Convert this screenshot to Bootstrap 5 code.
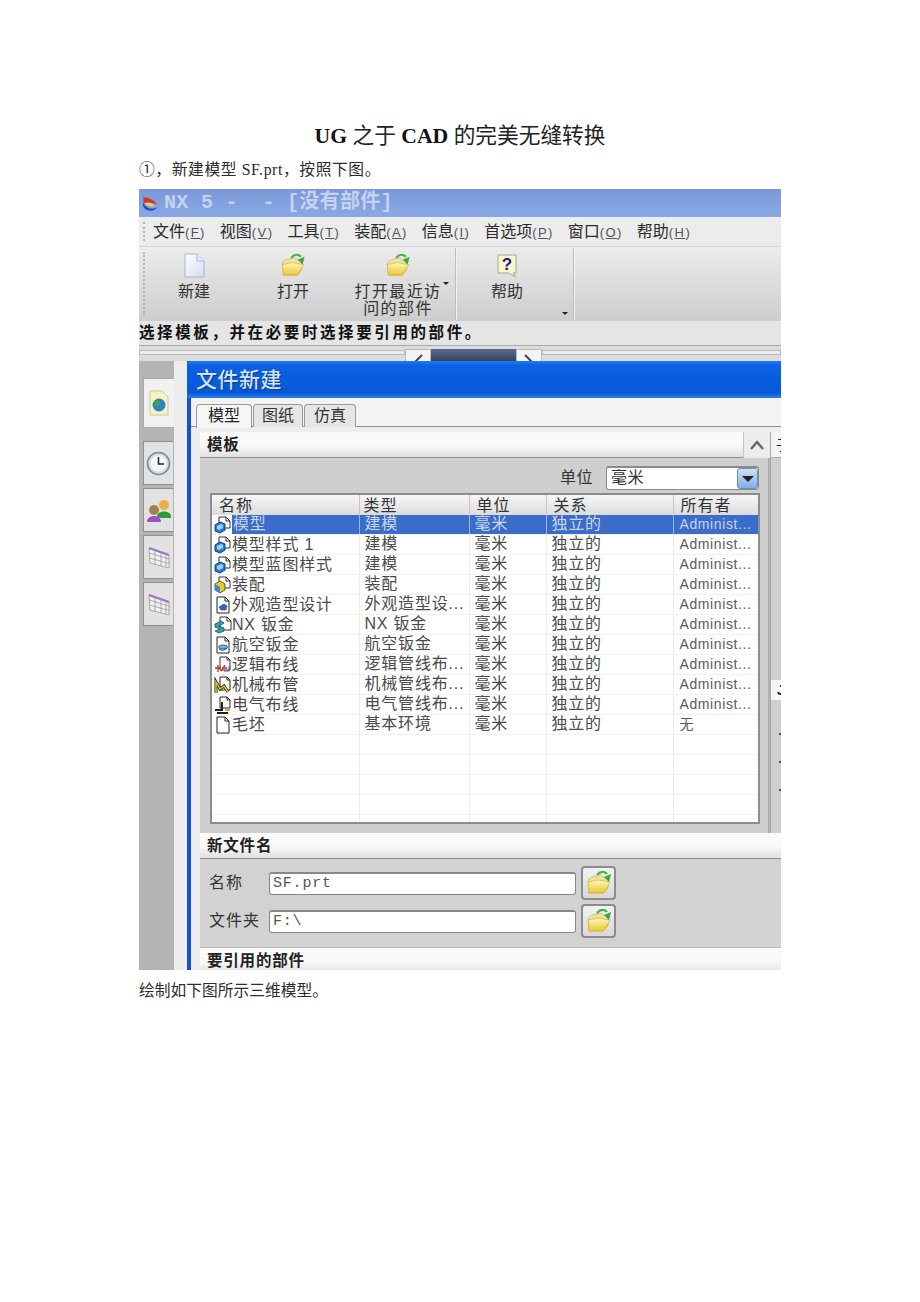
<!DOCTYPE html>
<html lang="zh-CN">
<head>
    <meta charset="UTF-8">
    <title>UG之于CAD的完美无缝转换</title>
    <link href="https://cdn.jsdelivr.net/npm/bootstrap@5.3.0/dist/css/bootstrap.min.css" rel="stylesheet">
    <style>
        html, body { height: 1302px; overflow: hidden; background: #fff; }
        body { font-family: "Liberation Sans", "Noto Sans CJK SC", sans-serif; color: #333; }
        .doc-text { font-family: "Liberation Serif", "Noto Sans CJK SC", serif; font-size: 15.75px; line-height: 20px; color: #2c2c2c; margin: 0 0 0 139px; }
        .doc-title { font-family: "Liberation Serif", "Noto Sans CJK SC", serif; font-size: 21.7px; line-height: 28px; text-align: center; color: #222; margin: 122px 0 0 0; }
        .doc-title b { font-weight: 700; color: #111; }
        .doc-step { margin-top: 10px; letter-spacing: .6px; }
        .doc-caption { margin-top: 11px; }
        .app { width: 642px; height: 781px; margin: 9px 0 0 139px; overflow: hidden; background: #d0d0d0; }

        .nx-title { height: 28px; background: linear-gradient(#7b99d8, #88a8e6); padding-left: 3px; gap: 5px; }
        .nx-title-text { font-family: "Liberation Mono", "Noto Sans CJK SC", monospace; font-size: 20px; font-weight: 700; line-height: 26px; color: #c6d3ee; white-space: pre; letter-spacing: .3px; }
        .nx-menu { height: 30px; background: #ececec; border-bottom: 1px solid #d4d4d4; padding-left: 14px; gap: 14px; }
        .grip { position: absolute; left: 4px; top: 5px; bottom: 5px; border-left: 2px dotted #b5b5b5; }
        .nx-menu-item { font-size: 16px; line-height: 29px; color: #2a2a2a; white-space: nowrap; }
        .nx-menu-item small { font-family: "Liberation Sans", sans-serif; font-size: 13px; letter-spacing: 1.4px; color: #555; }
        .nx-menu-item u { text-underline-offset: 1px; }
        .nx-tools { height: 75px; background: linear-gradient(#ececec, #cdcdcd); border-bottom: 1px solid #e4e4e4; padding-left: 9px; }
        .tool-item { text-align: center; font-size: 16px; line-height: 17px; color: #333; padding-top: 6px; }
        .tool-item svg { display: block; margin: 0 auto 5px; }
        .tool-sep { width: 2px; background: #f2f2f2; border-left: 1px solid #bdbdbd; margin: 1px 0; }
        .tool-w1 { width: 92px; }
        .tool-w2 { width: 106px; }
        .tool-w3 { width: 104px; letter-spacing: 1.4px; }
        .tool-w4 { width: 100px; }
        .tool-w5 { width: 16px; }
        .tool-gap { width: 5px; }
        .caret-down { position: absolute; width: 0; height: 0; border-left: 3px solid transparent; border-right: 3px solid transparent; border-top: 3px solid #222; }
        .caret-a { left: 304px; top: 35px; }
        .caret-b { right: 5px; bottom: 6px; }
        .nx-cue { height: 23px; background: #e5e5e5; font-size: 15.5px; line-height: 22px; font-weight: 700; color: #111; letter-spacing: 2.6px; white-space: nowrap; }
        .nx-sash { height: 16px; background: #dcdcdc; border-top: 1px solid #aaa; padding: 3px 0 0 0; align-items: flex-start; }
        .sash-line { height: 5px; border: 1px solid #bbb; background: #ececec; margin-top: 1px; }
        .sash-left { width: 266px; }
        .sash-btn { width: 26px; height: 13px; background: #f4f4f4; border: 1px solid #bbb; border-bottom: 0; }
        .sash-btn svg { display: block; margin: 4px auto 0; }
        .sash-mid { width: 85px; height: 13px; background: linear-gradient(#5d6a8c, #343d5c); }

        .nx-body { height: 609px; }
        .side-rail { width: 35px; background: #b4b4b4; padding: 17px 0 0 4px; gap: 3px; flex-shrink: 0; }
        .rail-tab { width: 30px; height: 44px; background: #e2e2e2; border: 1px solid #8f8f8f; border-right: 0; align-items: center; justify-content: center; }
        .rail-tab-on { height: 50px; background: #f1f1f1; width: 31px; margin-bottom: 10px; border-color: #aaa; }
        .side-gap { width: 13px; background: #ececec; flex-shrink: 0; }
        .dlg { width: 594px; border-left: 4px solid #1450d8; background: #efefef; }
        .dlg-title { height: 37px; background: linear-gradient(#1f7df0 0, #0a62e6 12%, #0758d6 85%, #2a7ff0 100%); color: #d3e2ff; font-size: 21px; line-height: 37px; font-weight: 500; letter-spacing: .5px; text-shadow: 1px 1px 1px #073a8c; margin-left: -4px; padding-left: 9px; border-radius: 4px 0 0 0; }
        .dlg-tabs { height: 29px; background: #f3f3f3; border-bottom: 1px solid #8e8e8e; padding: 6px 0 0 5px; gap: 1px; }
        .dlg-tab { height: 23px; background: #e6e6e6; border: 1px solid #9a9a9a; border-bottom: 0; border-radius: 4px 4px 0 0; font-size: 16px; line-height: 21px; text-align: center; color: #333; }
        .dlg-tab-on { width: 56px; background: #f6f6f6; height: 24px; color: #222; }
        .dlg-tab-2 { width: 50px; }
        .dlg-tab-3 { width: 52px; }
        .dlg-main { padding: 5px 0 0 9px; background: #ededed; height: 543px; }
        .sec-head { height: 26px; background: linear-gradient(#fbfbfb 0, #f8f8f8 55%, #e0e0e0 100%); border-bottom: 1px solid #8f8f8f; font-size: 15.5px; line-height: 26px; font-weight: 700; color: #222; padding-left: 7px; letter-spacing: .8px; }
        .sec-panel { background: #cfcfcf; }
        .up-btn { width: 27px; height: 26px; background: #ececec; border-left: 1px solid #c4c4c4; align-items: center; justify-content: center; }
        .tpl-col { width: 570px; height: 401px; flex-shrink: 0; }
        .tpl-panel { height: 375px; padding: 8px 9px 9px 10px; border-right: 2px solid #b0b0b0; }
        .unit-row { height: 23px; margin-bottom: 4px; justify-content: flex-end; font-size: 16px; line-height: 23px; color: #333; gap: 13px; letter-spacing: .5px; }
        .unit-combo { width: 153px; height: 24px; background: #fff; border: 1px solid #8a8a8a; border-top-width: 2px; border-radius: 3px; padding-left: 4px; line-height: 20px; }
        .unit-arrow { width: 21px; background: linear-gradient(#cfe2f7, #7fb0e6); border: 1px solid #6c8db8; border-radius: 3px; align-items: center; justify-content: center; }
        .unit-arrow i { width: 0; height: 0; border-left: 6px solid transparent; border-right: 6px solid transparent; border-top: 6px solid #222; }
        .tpl-box { height: 331px; width: 550px; background: #fff; border: 2px solid #8c8c8c; overflow: hidden; }
        .tpl-table { table-layout: fixed; width: 548px; margin: 0; border-collapse: collapse; }
        .tpl-table th { height: 20px; padding: 0 0 0 7px; background: linear-gradient(#f6f6f6, #dcdcdc); font-weight: 400; font-size: 16px; line-height: 19px; color: #333; border: 0; border-right: 1px solid #c6c6c6; letter-spacing: 1px; }
        .tpl-table td { height: 19.85px; padding: 0 0 0 5px; font-size: 16px; line-height: 18px; color: #4a4a4a; border: 0; border-right: 1px solid #ececec; border-bottom: 1px solid #f2f2f2; white-space: nowrap; overflow: hidden; letter-spacing: .8px; }
        .tpl-table td.owner-cell { font-size: 14px; color: #5a5a5a; padding-left: 6px; letter-spacing: .6px; }
        .tpl-table td.name-cell { padding: 0; }
        .tpl-table td.name-cell svg { flex-shrink: 0; }
        .tpl-table tr.row-on td { background: #3a6cc9; color: #c9d6f0; border-right-color: #9db5e2; }
        .tpl-table tr.row-on td.name-cell { background: #fff; }
        .name-flex { height: 19px; align-items: center; gap: 0; padding-left: 2px; }
        .name-on { flex: 1; background: #3a6cc9; color: #c9d6f0; padding-left: 1px; height: 19px; }
        .right-strip { width: 11px; background: #cfcfcf; overflow: hidden; font-size: 14px; border-left: 1px solid #a8a8a8; flex-shrink: 0; }
        .strip-head { height: 26px; background: #f4f4f4; color: #222; line-height: 26px; padding-left: 5px; border-bottom: 1px solid #a8a8a8; }
        .strip-fill { height: 222px; background: #cfcfcf; }
        .strip-tab { height: 20px; background: #f6f6f6; color: #222; line-height: 20px; padding-left: 6px; font-weight: 700; }
        .strip-tail { padding: 33px 0 0 8px; gap: 26px; }
        .strip-tail i { width: 2px; height: 2px; background: #555; }
        .file-panel { height: 89px; padding: 7px 0 0 9px; background: #d2d2d2; border-bottom: 1px solid #b5b5b5; }
        .file-row { height: 34px; gap: 5px; align-items: center; margin-bottom: 4px; font-size: 16px; color: #333; letter-spacing: 1px; }
        .file-label { width: 55px; white-space: nowrap; }
        .file-input { width: 307px; height: 23px; background: #fff; border: 1px solid #888; border-top-width: 2px; border-radius: 3px; padding-left: 3px; font-family: "Liberation Mono", monospace; font-size: 15px; line-height: 19px; color: #5e5646; letter-spacing: .8px; }
        .file-btn { width: 35px; height: 34px; background: linear-gradient(#f2f2f2, #d8d8d8); border: 2px solid #8c8c8c; border-radius: 4px; align-items: center; justify-content: center; }
    </style>
</head>
<body>
    <svg width="0" height="0" class="d-block" aria-hidden="true">
        <defs>
            <linearGradient id="folderFill" x1="0" y1="0" x2="0" y2="1"><stop offset="0" stop-color="#fdf6c0"/><stop offset="1" stop-color="#e9c92e"/></linearGradient>
            <linearGradient id="docFill" x1="0" y1="0" x2="1" y2="1"><stop offset="0" stop-color="#fff"/><stop offset="1" stop-color="#d6dcf4"/></linearGradient>
            <symbol id="ic-folder" viewBox="0 0 26 26">
                <path d="M2 10 L6 7 L15 5 L19 8 L22 8 L22 18 L17 23 L3 23 Z" fill="#f0e29a" stroke="#c6ad48" stroke-width=".6"/>
                <path d="M3 23 L2 12 L12 10 L24 12 L18 23 Z" fill="url(#folderFill)" stroke="#c6a92c" stroke-width=".6"/>
                <path d="M11 5 C14 1 19 1 21 4" fill="none" stroke="#4bb04b" stroke-width="2.2"/>
                <path d="M18 7 L25 4 L23 12 Z" fill="#37a83c"/>
            </symbol>
            <symbol id="ic-doc-blue" viewBox="0 0 18 18">
                <path d="M5 1 H12 L16 5 V12 H5 Z" fill="#fff" stroke="#333" stroke-width="1"/>
                <path d="M12 1 V5 H16" fill="none" stroke="#333" stroke-width="1"/>
                <path d="M1 9 L6 6 L11 8 V14 L6 17 L1 15 Z" fill="#2c78d8" stroke="#12407c" stroke-width="1"/>
                <path d="M3 10 L7 8 L9 9 V12 L5 14 L3 13 Z" fill="#9ad0f5"/>
            </symbol>
            <symbol id="ic-doc-asm" viewBox="0 0 18 18">
                <path d="M5 1 H12 L16 5 V12 H5 Z" fill="#fff" stroke="#333" stroke-width="1"/>
                <path d="M12 1 V5 H16" fill="none" stroke="#333" stroke-width="1"/>
                <path d="M1 8 L6 5 L11 8 V14 L6 17 L1 14 Z" fill="#e9cd2d" stroke="#5a5a20" stroke-width="1"/>
                <path d="M1 8 L6 11 V17 L1 14 Z" fill="#3c8bd8"/>
            </symbol>
            <symbol id="ic-doc-shape" viewBox="0 0 18 18">
                <path d="M3 1 H11 L15 5 V17 H3 Z" fill="#fff" stroke="#222" stroke-width="1"/>
                <path d="M11 1 V5 H15" fill="none" stroke="#222" stroke-width="1"/>
                <path d="M5 11 L10 8 L13 10 L12 14 L7 14 Z" fill="#3a68b8" stroke="#1b3c78" stroke-width=".6"/>
            </symbol>
            <symbol id="ic-doc-sheet" viewBox="0 0 18 18">
                <path d="M6 1 H13 L17 5 V14 H6 Z" fill="#fff" stroke="#333" stroke-width="1"/>
                <path d="M13 1 V5 H17" fill="none" stroke="#333" stroke-width="1"/>
                <path d="M1 8 L7 5 L10 7 L5 10 L10 12 V15 L5 17 L1 15 L6 13 L1 11 Z" fill="#3aa0a8" stroke="#14505c" stroke-width=".8"/>
            </symbol>
            <symbol id="ic-doc-aero" viewBox="0 0 18 18">
                <path d="M3 1 H11 L15 5 V17 H3 Z" fill="#fff" stroke="#222" stroke-width="1"/>
                <path d="M11 1 V5 H15" fill="none" stroke="#222" stroke-width="1"/>
                <ellipse cx="9" cy="11" rx="4.5" ry="2" fill="#6fb2e8" stroke="#1b4c88" stroke-width=".8"/>
                <path d="M5 13 Q9 16 13 12" fill="none" stroke="#1b4c88" stroke-width="1"/>
            </symbol>
            <symbol id="ic-doc-logic" viewBox="0 0 18 18">
                <path d="M6 1 H13 L16 4 V14 H6 Z" fill="#fff" stroke="#333" stroke-width="1"/>
                <path d="M13 1 V4 H16" fill="none" stroke="#333" stroke-width="1"/>
                <path d="M1 12 H7 M4 9 V16 M7 15 L11 9 M8 12 H13" stroke="#d42020" stroke-width="1.3" fill="none"/>
                <path d="M10 15 H15 V10" stroke="#3b55b8" stroke-width="1" fill="none"/>
            </symbol>
            <symbol id="ic-doc-pipe" viewBox="0 0 18 18">
                <path d="M6 1 H13 L16 4 V14 H6 Z" fill="#fff" stroke="#222" stroke-width="1"/>
                <path d="M13 1 V4 H16" fill="none" stroke="#222" stroke-width="1"/>
                <path d="M2 17 V6 L6 13 L10 10 L14 16" fill="none" stroke="#222" stroke-width="3"/>
                <path d="M2 17 V6 L6 13 L10 10 L14 16" fill="none" stroke="#e3c82c" stroke-width="1.5"/>
            </symbol>
            <symbol id="ic-doc-wire" viewBox="0 0 18 18">
                <path d="M6 1 H13 L16 4 V12 H6 Z" fill="#fff" stroke="#222" stroke-width="1"/>
                <path d="M13 1 V4 H16" fill="none" stroke="#222" stroke-width="1"/>
                <path d="M8 6 V14 H1" fill="none" stroke="#222" stroke-width="2"/>
                <path d="M3 17 H14" fill="none" stroke="#222" stroke-width="2"/>
                <path d="M11 14 H16" fill="none" stroke="#c9b02a" stroke-width="2"/>
            </symbol>
            <symbol id="ic-doc-plain" viewBox="0 0 18 18">
                <path d="M3 1 H11 L15 5 V17 H3 Z" fill="#fff" stroke="#222" stroke-width="1"/>
                <path d="M11 1 V5 H15" fill="none" stroke="#222" stroke-width="1"/>
            </symbol>
            <symbol id="ic-grid" viewBox="0 0 24 24">
                <path d="M2 3 L22 10 V23 L3 18 Z" fill="#f1f1f1" stroke="#9a9a9a" stroke-width=".8"/>
                <path d="M2 3 L22 10" stroke="#a070c8" stroke-width="2"/>
                <path d="M2.3 8 L22 14 M2.6 13 L22 18.5 M8 5 L8 19.6 M14 7.2 L14 21 M19 9 V22" stroke="#9a9a9a" stroke-width=".8" fill="none"/>
            </symbol>
        </defs>
    </svg>

    <h1 class="doc-title fw-normal"><b>UG</b> 之于 <b>CAD</b> 的完美无缝转换</h1>
    <p class="doc-text doc-step">①&#xFF0C;新建模型 SF.prt&#xFF0C;按照下图。</p>

    <div class="app">
        <!-- NX title -->
        <div class="nx-title d-flex align-items-center">
            <svg width="17" height="18" viewBox="0 0 17 18">
                <path d="M1 3 C6 3 13 6 15 11 C11 8 6 8 2 9 Z" fill="#d8342c"/>
                <path d="M1 8 C4 15 10 16 16 13 C12 18 3 18 1 12 Z" fill="#2b49b8"/>
                <path d="M3 9 C7 8 10 9 13 12 C9 13 5 12 3 9 Z" fill="#efd53c"/>
            </svg>
            <div class="nx-title-text">NX 5 -  - [没有部件]</div>
        </div>

        <!-- Menu -->
        <div class="nx-menu d-flex position-relative">
            <div class="grip"></div>
            <div class="nx-menu-item">文件<small>(<u>F</u>)</small></div>
            <div class="nx-menu-item">视图<small>(<u>V</u>)</small></div>
            <div class="nx-menu-item">工具<small>(<u>T</u>)</small></div>
            <div class="nx-menu-item">装配<small>(<u>A</u>)</small></div>
            <div class="nx-menu-item">信息<small>(<u>I</u>)</small></div>
            <div class="nx-menu-item">首选项<small>(<u>P</u>)</small></div>
            <div class="nx-menu-item">窗口<small>(<u>O</u>)</small></div>
            <div class="nx-menu-item">帮助<small>(<u>H</u>)</small></div>
        </div>

        <!-- Toolbar -->
        <div class="nx-tools d-flex position-relative">
            <div class="grip"></div>
            <div class="tool-item tool-w1">
                <svg width="24" height="25" viewBox="0 0 24 25"><path d="M3 1 H15 L22 8 V24 H3 Z" fill="url(#docFill)" stroke="#a9b0d4"/><path d="M15 1 V8 H22" fill="#eef" stroke="#a9b0d4"/></svg>
                新建
            </div>
            <div class="tool-item tool-w2">
                <svg width="26" height="25"><use href="#ic-folder"/></svg>
                打开
            </div>
            <div class="tool-item tool-w3">
                <svg width="26" height="25"><use href="#ic-folder"/></svg>
                打开最近访<br>问的部件
            </div>
            <span class="caret-down caret-a"></span>
            <div class="tool-gap"></div>
            <div class="tool-sep"></div>
            <div class="tool-item tool-w4">
                <svg width="22" height="25" viewBox="0 0 22 25">
                    <path d="M2 2 H20 V20 H17 L20 24 L12 20 H2 Z" fill="#fbf7c4" stroke="#8cae9a"/>
                    <text x="11" y="17" text-anchor="middle" font-family="Liberation Sans" font-weight="700" font-size="17" fill="#1a1a90">?</text>
                </svg>
                帮助
            </div>
            <div class="tool-w5 position-relative"><span class="caret-down caret-b"></span></div>
            <div class="tool-sep"></div>
        </div>

        <div class="nx-cue">选择模板&#xFF0C;并在必要时选择要引用的部件。</div>

        <div class="nx-sash d-flex">
            <div class="sash-line sash-left"></div>
            <div class="sash-btn"><svg width="10" height="8" viewBox="0 0 10 8"><path d="M9 1 L2 8" stroke="#444" stroke-width="2"/></svg></div>
            <div class="sash-mid"></div>
            <div class="sash-btn"><svg width="10" height="8" viewBox="0 0 10 8"><path d="M1 1 L8 8" stroke="#444" stroke-width="2"/></svg></div>
            <div class="sash-line flex-grow-1"></div>
        </div>

        <div class="nx-body d-flex">
            <!-- Side tabs -->
            <div class="side-rail d-flex flex-column">
                <div class="rail-tab rail-tab-on d-flex">
                    <svg width="24" height="26" viewBox="0 0 24 26">
                        <path d="M3 1 H15 L21 7 V25 H3 Z" fill="#fbf3bf" stroke="#c9c9a8"/>
                        <circle cx="12" cy="15" r="6.5" fill="#2f7fd0"/>
                        <path d="M7 12 C10 9 13 10 14 14 C12 16 9 17 7 15 Z" fill="#3fa84a"/>
                    </svg>
                </div>
                <div class="rail-tab d-flex">
                    <svg width="25" height="25" viewBox="0 0 25 25">
                        <circle cx="12.5" cy="12.5" r="11" fill="#cfe0ec" stroke="#7d8c9a" stroke-width="1.6"/>
                        <circle cx="12.5" cy="12.5" r="8" fill="#f4f8fb"/>
                        <path d="M12.5 6 V13 H18" fill="none" stroke="#222" stroke-width="1.5"/>
                    </svg>
                </div>
                <div class="rail-tab d-flex">
                    <svg width="26" height="26" viewBox="0 0 26 26">
                        <circle cx="18" cy="8" r="5" fill="#e3b04a"/>
                        <path d="M11 19 C11 13 25 13 25 19 V21 H11 Z" fill="#2e9a3c"/>
                        <circle cx="8" cy="13" r="5" fill="#a08050"/>
                        <path d="M1 25 C1 17 15 17 15 25 Z" fill="#a04fc8"/>
                    </svg>
                </div>
                <div class="rail-tab d-flex"><svg width="24" height="24"><use href="#ic-grid"/></svg></div>
                <div class="rail-tab d-flex"><svg width="24" height="24"><use href="#ic-grid"/></svg></div>
            </div>
            <div class="side-gap"></div>

            <!-- File new dialog -->
            <div class="dlg">
                <div class="dlg-title">文件新建</div>
                <div class="dlg-tabs d-flex">
                    <div class="dlg-tab dlg-tab-on">模型</div>
                    <div class="dlg-tab dlg-tab-2">图纸</div>
                    <div class="dlg-tab dlg-tab-3">仿真</div>
                </div>
                <div class="dlg-main">
                    <div class="d-flex">
                        <div class="tpl-col">
                            <div class="sec-head d-flex justify-content-between pe-0">
                                <span>模板</span>
                                <div class="up-btn d-flex">
                                    <svg width="14" height="10" viewBox="0 0 14 10"><path d="M1 9 L7 2 L13 9" fill="none" stroke="#666" stroke-width="2.4"/></svg>
                                </div>
                            </div>
                            <div class="sec-panel tpl-panel">
                                <div class="unit-row d-flex">
                                    <span>单位</span>
                                    <div class="unit-combo d-flex justify-content-between">
                                        <span>毫米</span>
                                        <div class="unit-arrow d-flex"><i></i></div>
                                    </div>
                                </div>
                                <div class="tpl-box">
                                    <table class="table tpl-table">
                                        <colgroup><col style="width:147px"><col style="width:110px"><col style="width:77px"><col style="width:127px"><col style="width:87px"></colgroup>
                                        <thead><tr><th>名称</th><th class="ps-1">类型</th><th>单位</th><th>关系</th><th>所有者</th></tr></thead>
                                        <tbody id="tplRows"></tbody>
                                    </table>
                                </div>
                            </div>
                        </div>
                        <div class="right-strip d-flex flex-column">
                            <div class="strip-head">子</div>
                            <div class="strip-fill"></div>
                            <div class="strip-tab">J</div>
                            <div class="strip-tail d-flex flex-column"><i></i><i></i><i></i></div>
                        </div>
                    </div>

                    <div class="sec-head">新文件名</div>
                    <div class="file-panel">
                        <div class="file-row d-flex">
                            <div class="file-label">名称</div>
                            <div class="file-input">SF.prt</div>
                            <div class="file-btn d-flex"><svg width="26" height="26"><use href="#ic-folder"/></svg></div>
                        </div>
                        <div class="file-row d-flex">
                            <div class="file-label">文件夹</div>
                            <div class="file-input">F:\</div>
                            <div class="file-btn d-flex"><svg width="26" height="26"><use href="#ic-folder"/></svg></div>
                        </div>
                    </div>
                    <div class="sec-head">要引用的部件</div>
                </div>
            </div>
        </div>
    </div>

    <p class="doc-text doc-caption">绘制如下图所示三维模型。</p>

    <script>
        // rows of the template list
        const rows = [
            ['ic-doc-blue', '模型', '建模', '毫米', '独立的', 'Administ...'],
            ['ic-doc-blue', '模型样式 1', '建模', '毫米', '独立的', 'Administ...'],
            ['ic-doc-blue', '模型蓝图样式', '建模', '毫米', '独立的', 'Administ...'],
            ['ic-doc-asm', '装配', '装配', '毫米', '独立的', 'Administ...'],
            ['ic-doc-shape', '外观造型设计', '外观造型设...', '毫米', '独立的', 'Administ...'],
            ['ic-doc-sheet', 'NX 钣金', 'NX 钣金', '毫米', '独立的', 'Administ...'],
            ['ic-doc-aero', '航空钣金', '航空钣金', '毫米', '独立的', 'Administ...'],
            ['ic-doc-logic', '逻辑布线', '逻辑管线布...', '毫米', '独立的', 'Administ...'],
            ['ic-doc-pipe', '机械布管', '机械管线布...', '毫米', '独立的', 'Administ...'],
            ['ic-doc-wire', '电气布线', '电气管线布...', '毫米', '独立的', 'Administ...'],
            ['ic-doc-plain', '毛坯', '基本环境', '毫米', '独立的', '无']
        ];
        let html = '';
        rows.forEach((r, i) => {
            html += `<tr class="${i === 0 ? 'row-on' : ''}">
                <td class="name-cell"><div class="name-flex d-flex"><svg width="18" height="18"><use href="#${r[0]}"/></svg><div class="${i === 0 ? 'name-on' : ''}">${r[1]}</div></div></td>
                <td>${r[2]}</td><td>${r[3]}</td><td>${r[4]}</td><td class="owner-cell">${r[5]}</td></tr>`;
        });
        for (let i = 0; i < 5; i++) {
            html += '<tr><td></td><td></td><td></td><td></td><td></td></tr>';
        }
        document.getElementById('tplRows').innerHTML = html;
    </script>
    <script src="https://cdn.jsdelivr.net/npm/bootstrap@5.3.0/dist/js/bootstrap.bundle.min.js"></script>
</body>
</html>
